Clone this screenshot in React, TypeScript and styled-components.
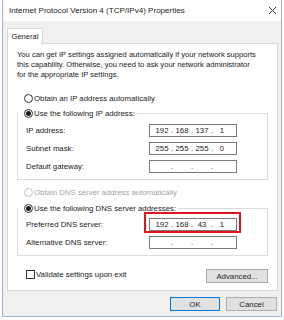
import React from "react";
import styled, { createGlobalStyle } from "styled-components";

const Global = createGlobalStyle`
  html, body { margin: 0; padding: 0; background: #ffffff; }
  body { font-family: "Liberation Sans", Arial, sans-serif; color: #1a1a1a; }
  * { box-sizing: border-box; }
`;

const Window = styled.div`
  width: 280px;
  height: 317px;
  margin-left: 2px;
  border: 1px solid #9fb4cc;
  border-top: none;
  display: flex;
  flex-direction: column;
  background: #f0f0f0;
`;

const TitleBar = styled.div`
  height: 21px;
  background: #ffffff;
  display: flex;
  align-items: center;
  padding-left: 6px;
  padding-right: 4px;
  font-size: 8.05px;
  color: #222;
`;

const TitleText = styled.div`
  flex: 1;
`;

const Body = styled.div`
  flex: 1;
  display: flex;
  flex-direction: column;
  padding: 7px 3px 0 4px;
`;

const TabStrip = styled.div`
  display: flex;
  height: 16px;
  margin-bottom: -1px;
  position: relative;
  z-index: 1;
`;

const Tab = styled.div`
  width: 36px;
  height: 17px;
  background: #ffffff;
  border: 1px solid #d9d9d9;
  border-bottom: none;
  font-size: 7.6px;
  display: flex;
  align-items: center;
  justify-content: center;
  padding-bottom: 2px;
`;

const Panel = styled.div`
  background: #ffffff;
  border: 1px solid #d9d9d9;
  padding: 6px 9px 7px 9px;
  display: flex;
  flex-direction: column;
  font-size: 7.8px;
`;

const Intro = styled.div`
  line-height: 10px;
  font-size: 7.6px;
  white-space: nowrap;
`;

const RadioRow = styled.label<{ $disabled?: boolean; $mt?: number }>`
  display: flex;
  align-items: center;
  height: 10px;
  gap: 1px;
  padding-left: 7px;
  margin-top: ${(p) => p.$mt ?? 0}px;
  color: ${(p) => (p.$disabled ? "#a3a3a3" : "#1a1a1a")};
  white-space: nowrap;
`;

const RadioCircle = styled.span<{ $checked?: boolean; $disabled?: boolean }>`
  width: 9px;
  height: 9px;
  border-radius: 50%;
  border: 1px solid ${(p) => (p.$disabled ? "#c4c4c4" : "#333333")};
  background: #ffffff;
  display: flex;
  align-items: center;
  justify-content: center;
  flex-shrink: 0;
  &::after {
    content: "";
    display: ${(p) => (p.$checked ? "block" : "none")};
    width: 5px;
    height: 5px;
    border-radius: 50%;
    background: #1a1a1a;
  }
`;

const Group = styled.fieldset<{ $mt: number; $pt: number; $pb: number }>`
  margin: ${(p) => p.$mt}px 0 0 0;
  padding: ${(p) => p.$pt}px 0 ${(p) => p.$pb}px 8px;
  border: 1px solid #dcdcdc;
  min-width: 0;
`;

const Legend = styled.legend`
  padding: 0 2px 0 0;
  margin-left: -8px;
`;

const LegendRow = styled(RadioRow)`
  padding-left: 6px;
`;

const FieldRow = styled.div<{ $h: number }>`
  display: flex;
  align-items: center;
  height: ${(p) => p.$h}px;
  padding-right: 30px;
`;

const FieldLabel = styled.span`
  flex: 1;
  white-space: nowrap;
`;

const IpBox = styled.div`
  position: relative;
  width: 88px;
  height: 13px;
  border: 1px solid #7a7a7a;
  background: #ffffff;
  display: flex;
  align-items: center;
  padding-left: 4px;
  font-size: 7.8px;
`;

const Segment = styled.span`
  width: 16px;
  text-align: center;
`;

const Dot = styled.span`
  width: 4px;
  text-align: center;
`;

const Highlight = styled.span`
  position: absolute;
  left: -6px;
  right: -5px;
  top: -7px;
  bottom: -3px;
  border: 2px solid #e3131b;
  pointer-events: none;
`;

const BottomRow = styled.div`
  display: flex;
  justify-content: space-between;
  align-items: flex-start;
  margin-top: 13px;
`;

const CheckRow = styled.label`
  display: flex;
  align-items: center;
  gap: 1px;
  height: 10px;
  padding-left: 9px;
  white-space: nowrap;
`;

const CheckBox = styled.span`
  width: 9px;
  height: 9px;
  border: 1px solid #333333;
  background: #ffffff;
  flex-shrink: 0;
`;

const Button = styled.button<{ $w: number; $default?: boolean }>`
  width: ${(p) => p.$w}px;
  height: 14px;
  padding: 0;
  margin: 0;
  background: #e1e1e1;
  border: 1px solid ${(p) => (p.$default ? "#0078d7" : "#adadad")};
  font-family: "Liberation Sans", Arial, sans-serif;
  font-size: 7.8px;
  color: #1a1a1a;
  display: flex;
  align-items: center;
  justify-content: center;
`;

const Footer = styled.div`
  display: flex;
  justify-content: flex-end;
  gap: 6px;
  padding-top: 6px;
  padding-right: 1px;
`;

const CloseIcon = () => (
  <svg width="9" height="9" viewBox="0 0 9 9">
    <path d="M1 1 L8 8 M8 1 L1 8" stroke="#333" strokeWidth="1" />
  </svg>
);

const Ip = ({ parts, highlight }: { parts: string[]; highlight?: boolean }) => (
  <IpBox>
    <Segment>{parts[0]}</Segment>
    <Dot>.</Dot>
    <Segment>{parts[1]}</Segment>
    <Dot>.</Dot>
    <Segment>{parts[2]}</Segment>
    <Dot>.</Dot>
    <Segment>{parts[3]}</Segment>
    {highlight && <Highlight />}
  </IpBox>
);

const empty = ["", "", "", ""];

export default function App() {
  return (
    <>
      <Global />
      <Window>
        <TitleBar>
          <TitleText>Internet Protocol Version 4 (TCP/IPv4) Properties</TitleText>
          <CloseIcon />
        </TitleBar>
        <Body>
          <TabStrip>
            <Tab>General</Tab>
          </TabStrip>
          <Panel>
            <Intro>
              You can get IP settings assigned automatically if your network supports
              <br />
              this capability. Otherwise, you need to ask your network administrator
              <br />
              for the appropriate IP settings.
            </Intro>
            <RadioRow $mt={13}>
              <RadioCircle />
              Obtain an IP address automatically
            </RadioRow>
            <Group $mt={5} $pt={3} $pb={4}>
              <Legend>
                <LegendRow>
                  <RadioCircle $checked />
                  Use the following IP address:
                </LegendRow>
              </Legend>
              <FieldRow $h={18}>
                <FieldLabel>IP address:</FieldLabel>
                <Ip parts={["192", "168", "137", "1"]} />
              </FieldRow>
              <FieldRow $h={18}>
                <FieldLabel>Subnet mask:</FieldLabel>
                <Ip parts={["255", "255", "255", "0"]} />
              </FieldRow>
              <FieldRow $h={18}>
                <FieldLabel>Default gateway:</FieldLabel>
                <Ip parts={empty} />
              </FieldRow>
            </Group>
            <RadioRow $mt={7} $disabled>
              <RadioCircle $disabled />
              Obtain DNS server address automatically
            </RadioRow>
            <Group $mt={6} $pt={2} $pb={3}>
              <Legend>
                <LegendRow>
                  <RadioCircle $checked />
                  Use the following DNS server addresses:
                </LegendRow>
              </Legend>
              <FieldRow $h={18}>
                <FieldLabel>Preferred DNS server:</FieldLabel>
                <Ip parts={["192", "168", "43", "1"]} highlight />
              </FieldRow>
              <FieldRow $h={19}>
                <FieldLabel>Alternative DNS server:</FieldLabel>
                <Ip parts={empty} />
              </FieldRow>
            </Group>
            <BottomRow>
              <CheckRow>
                <CheckBox />
                Validate settings upon exit
              </CheckRow>
              <Button $w={62}>Advanced...</Button>
            </BottomRow>
          </Panel>
          <Footer>
            <Button $w={50} $default>
              OK
            </Button>
            <Button $w={51}>Cancel</Button>
          </Footer>
        </Body>
      </Window>
    </>
  );
}
